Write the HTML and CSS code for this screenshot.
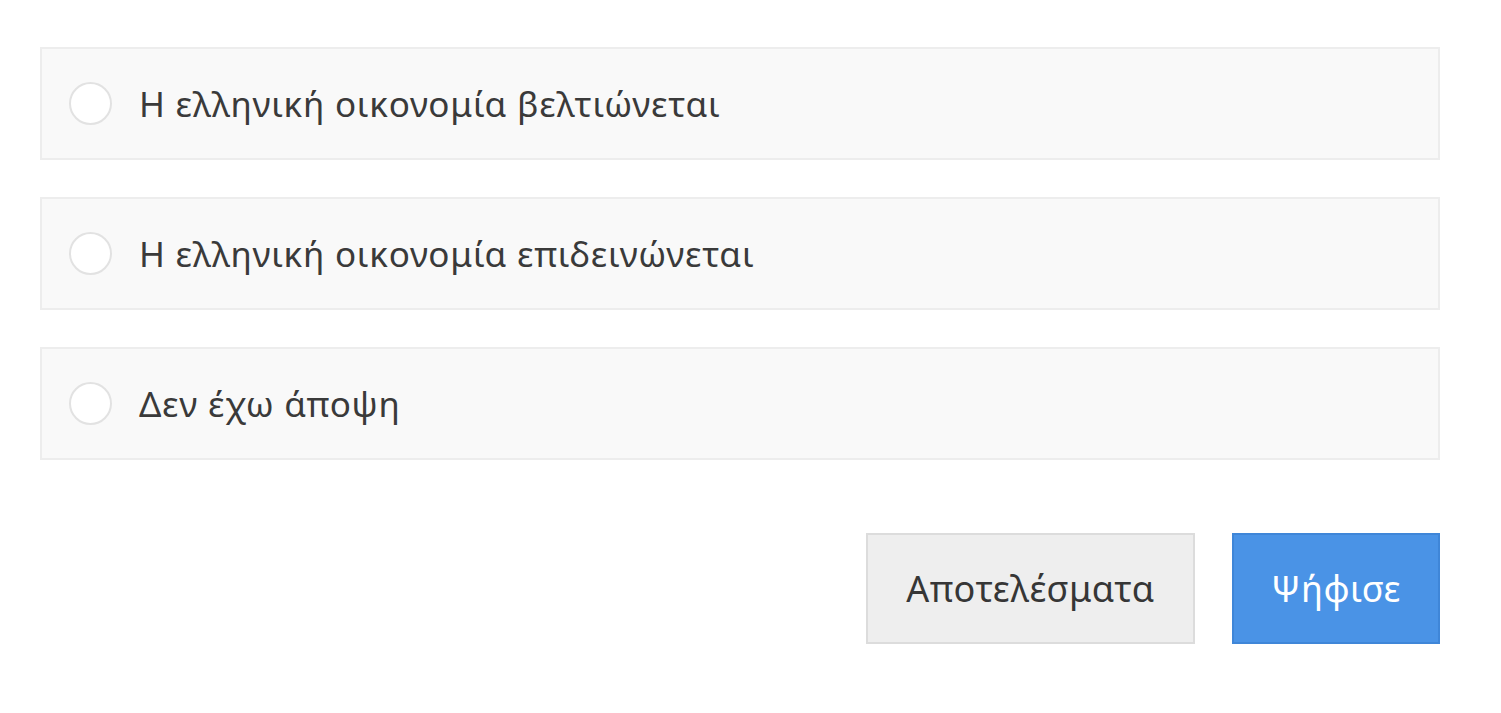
FILE: index.html
```html
<!DOCTYPE html>
<html lang="el">
<head>
<meta charset="utf-8">
<link rel="stylesheet" href="styles.css">
</head>
<body>
<div class="poll">
  <label class="option"><span class="radio"></span><span class="label">Η ελληνική οικονομία βελτιώνεται</span></label>
  <label class="option"><span class="radio"></span><span class="label">Η ελληνική οικονομία επιδεινώνεται</span></label>
  <label class="option"><span class="radio"></span><span class="label">Δεν έχω άποψη</span></label>
  <div class="actions">
    <button class="btn btn-results">Αποτελέσματα</button>
    <button class="btn btn-vote">Ψήφισε</button>
  </div>
</div>
</body>
</html>
```

FILE: styles.css
```css
html, body {
  margin: 0;
  padding: 0;
  background: #fff;
}
body {
  font-family: "Noto Sans", "Open Sans", sans-serif;
  color: #333;
}
.poll {
  padding: 47px 61px 0 40px;
  display: flex;
  flex-direction: column;
  gap: 37px;
}
.option {
  box-sizing: border-box;
  height: 113px;
  background: #f9f9f9;
  border: 2px solid #ededed;
  display: flex;
  align-items: center;
  padding-left: 27px;
}
.radio {
  box-sizing: border-box;
  width: 43px;
  height: 43px;
  border-radius: 50%;
  background: #fff;
  border: 2px solid #e2e2e2;
  flex: none;
}
.label {
  margin-left: 27px;
  font-size: 35px;
  letter-spacing: 0.75px;
  color: #3a3a3a;
}
.actions {
  display: flex;
  justify-content: flex-end;
  gap: 37px;
  margin-top: 36px;
}
.btn {
  box-sizing: border-box;
  height: 111px;
  font-family: "Noto Sans", "Open Sans", sans-serif;
  font-size: 36px;
  letter-spacing: 0.5px;
  padding: 0;
  cursor: pointer;
}
.btn-results {
  width: 329px;
  background: #eeeeee;
  border: 2px solid #dcdcdc;
  color: #363636;
}
.btn-vote {
  width: 208px;
  background: #4a93e6;
  border: 2px solid #3f86d8;
  color: #fff;
}
```
